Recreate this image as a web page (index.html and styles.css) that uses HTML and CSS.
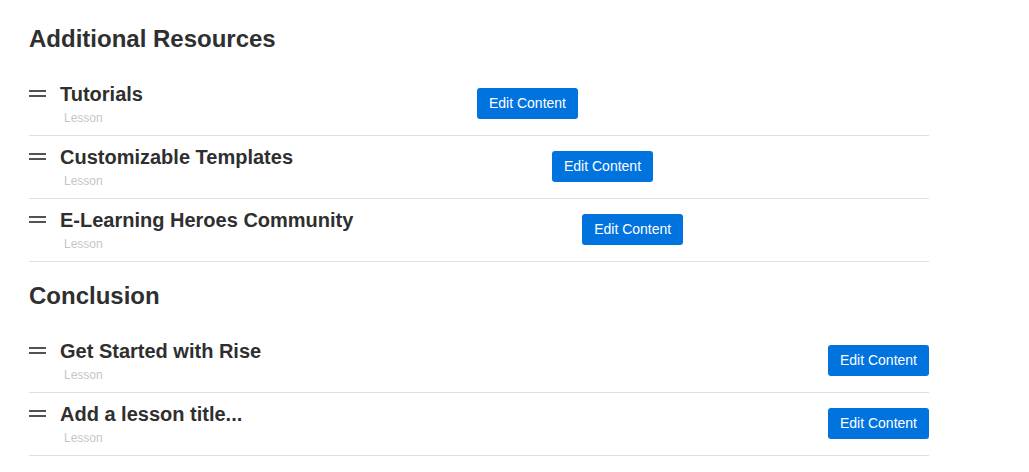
FILE: index.html
```html
<!DOCTYPE html>
<html lang="en">
<head>
<meta charset="utf-8">
<title>Lessons</title>
<link rel="stylesheet" href="styles.css">
</head>
<body>
<main class="outline">
  <section class="section">
    <h2 class="section__title">Additional Resources</h2>
    <ul class="lessons lessons--centered">
      <li class="lesson">
        <span class="lesson__handle" aria-hidden="true"></span>
        <div class="lesson__text">
          <div class="lesson__title">Tutorials</div>
          <div class="lesson__type">Lesson</div>
        </div>
        <button class="lesson__btn" type="button">Edit Content</button>
      </li>
      <li class="lesson">
        <span class="lesson__handle" aria-hidden="true"></span>
        <div class="lesson__text">
          <div class="lesson__title">Customizable Templates</div>
          <div class="lesson__type">Lesson</div>
        </div>
        <button class="lesson__btn" type="button">Edit Content</button>
      </li>
      <li class="lesson">
        <span class="lesson__handle" aria-hidden="true"></span>
        <div class="lesson__text">
          <div class="lesson__title">E-Learning Heroes Community</div>
          <div class="lesson__type">Lesson</div>
        </div>
        <button class="lesson__btn" type="button">Edit Content</button>
      </li>
    </ul>
  </section>
  <section class="section">
    <h2 class="section__title">Conclusion</h2>
    <ul class="lessons">
      <li class="lesson">
        <span class="lesson__handle" aria-hidden="true"></span>
        <div class="lesson__text">
          <div class="lesson__title">Get Started with Rise</div>
          <div class="lesson__type">Lesson</div>
        </div>
        <button class="lesson__btn" type="button">Edit Content</button>
      </li>
      <li class="lesson">
        <span class="lesson__handle" aria-hidden="true"></span>
        <div class="lesson__text">
          <div class="lesson__title">Add a lesson title...</div>
          <div class="lesson__type">Lesson</div>
        </div>
        <button class="lesson__btn" type="button">Edit Content</button>
      </li>
    </ul>
  </section>
</main>
</body>
</html>
```

FILE: styles.css
```css
* {
  box-sizing: border-box;
}

html, body {
  margin: 0;
  padding: 0;
  background: #ffffff;
}

body {
  font-family: "Liberation Sans", Arial, sans-serif;
  color: #2f2f2f;
}

.outline {
  width: 900px;
  margin-left: 29px;
  padding-top: 5px;
}

.section__title {
  margin: 20px 0;
  font-size: 24px;
  line-height: 28px;
  font-weight: 700;
  color: #2f2f2f;
}

.lessons {
  list-style: none;
  margin: 0;
  padding: 0;
}

.lesson {
  display: flex;
  align-items: center;
  border-bottom: 1px solid #e0e0e0;
}

.lesson__handle {
  align-self: flex-start;
  width: 17px;
  height: 7px;
  margin-top: 17px;
  margin-right: 14px;
  border-top: 2px solid #525252;
  border-bottom: 2px solid #525252;
  flex-shrink: 0;
}

.lesson__text {
  align-self: flex-start;
  padding: 9px 0 10px;
}

.lesson__title {
  font-size: 20px;
  line-height: 24px;
  font-weight: 700;
  color: #2f2f2f;
  white-space: nowrap;
}

.lesson__type {
  margin-top: 5px;
  padding-left: 4px;
  font-size: 12px;
  line-height: 14px;
  color: #c6c6c6;
}

.lesson__btn {
  flex-shrink: 0;
  margin-left: auto;
  margin-bottom: 1px;
  height: 31px;
  padding: 0 12px;
  border: 0;
  border-radius: 3px;
  background: #0073df;
  color: #ffffff;
  font-family: "Liberation Sans", Arial, sans-serif;
  font-size: 14px;
  line-height: 31px;
  white-space: nowrap;
  cursor: pointer;
}

.lessons--centered .lesson {
  padding-right: 17px;
}

.lessons--centered .lesson__btn {
  margin-right: auto;
}
```
